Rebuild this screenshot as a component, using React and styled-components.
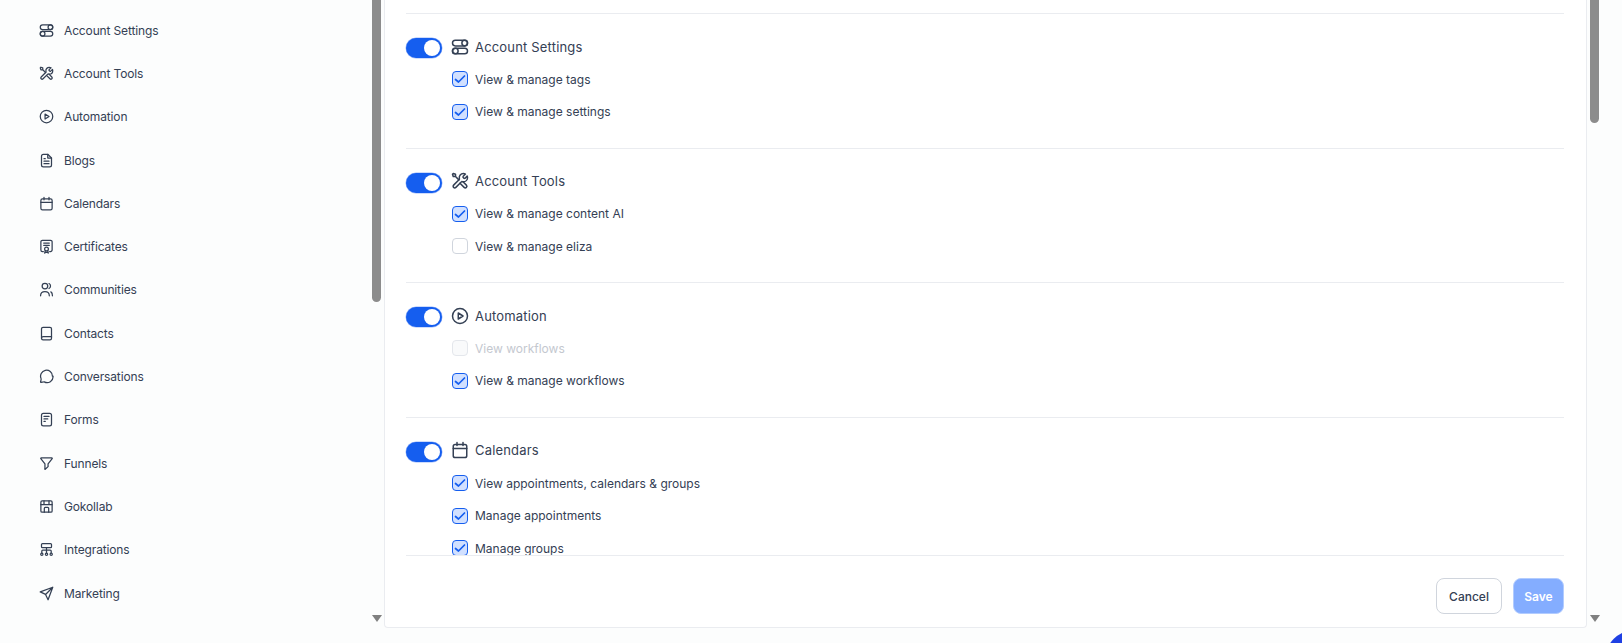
import React from 'react';
import styled, { createGlobalStyle } from 'styled-components';

const Global = createGlobalStyle`
  html, body { margin: 0; padding: 0; height: 100%; overflow: hidden; background: #fcfdfd; }
  #root { height: 100%; }
  * { box-sizing: border-box; }
`;

const Page = styled.div`
  position: relative; width: 1622px; height: 643px; display: flex; overflow: hidden;
  font-family: Inter, "Liberation Sans", sans-serif; color: #344054; background: #fcfdfd;
`;
const Sidebar = styled.nav`
  width: 372px; padding: 8.500px 0 0 39px; display: flex; flex-direction: column;
`;
const NavItem = styled.div`
  height: 43.3px; flex: none; display: flex; align-items: center; gap: 10px; font-size: 12px; letter-spacing: -.14px; color: #344054;
  svg { flex: none; width: 15px; height: 15px; color: #344054; }
`;
const Track = styled.div`
  width: 9px; height: 627px; display: flex; flex-direction: column; justify-content: space-between; align-items: center;
`;
const Thumb = styled.div`
  width: 9px; height: ${p => p.$h}px; background: #8c8c8c; border-radius: 0 0 5px 5px;
`;
const Arrow = styled.div`
  width: 0; height: 0; border-left: 5px solid transparent; border-right: 5px solid transparent; border-top: 7px solid #808080; margin-bottom: 5px;
`;
const Card = styled.main`
  width: 1203px; height: 628px; margin-left: 3px; margin-right: 3px; background: #fff;
  border: 1px solid #eaecf0; border-top: 0; border-radius: 0 0 4px 4px; display: flex; flex-direction: column;
`;
const Scroll = styled.div`
  height: 555px; overflow: hidden; padding: 13px 22px 0 21px; flex: none;
`;
const Section = styled.section`
  border-top: 1px solid #eaecf0; height: 134.6px; padding-top: 22px;
`;
const Head = styled.div`
  display: flex; align-items: center; height: 24px; font-size: 13px; color: #344054; letter-spacing: .18px;
  svg { width: 18px; height: 18px; margin: -3px 6px 0 9px; color: #344054; flex: none; }
  span { margin-top: -3px; }
`;
const Toggle = styled.div`
  width: 36px; height: 20px; border-radius: 10px; background: #155eef; padding: 2px 0 2px 18px; flex: none; box-shadow: 0 0 0 .5px #9db8f8;
  &::after { content: ''; display: block; width: 16px; height: 16px; border-radius: 50%; background: #fff; }
`;
const Row = styled.div`
  display: flex; align-items: center; gap: 7px; height: 32.5px; padding-left: 46px; font-size: 12px;
  color: ${p => (p.$disabled ? '#c4c8cf' : '#344054')};
`;
const Box = styled.span`
  width: 16px; height: 16px; border-radius: 4px; flex: none; display: flex; align-items: center; justify-content: center;
  border: 1px solid ${p => (p.$checked ? '#155eef' : p.$disabled ? '#e4e7ec' : '#d0d5dd')};
  background: ${p => (p.$checked ? '#d1e0ff' : p.$disabled ? '#f9fafb' : '#fff')};
  svg { width: 12px; height: 12px; color: #155eef; }
`;
const Checks = styled.div`
  padding-top: 3px;
`;
const Footer = styled.footer`
  margin: 0 22px 0 21px; border-top: 1px solid #eaecf0; padding-top: 22px; display: flex; justify-content: flex-end; gap: 11px;
`;
const Button = styled.button`
  height: 36px; border-radius: 8px; font: ${p => (p.$primary ? 600 : 500)} 12px Inter, "Liberation Sans", sans-serif; padding: 0;
  width: ${p => (p.$primary ? '51px' : '66px')};
  color: ${p => (p.$primary ? '#fff' : '#344054')};
  background: ${p => (p.$primary ? '#84adff' : '#fff')};
  border: 1px solid ${p => (p.$primary ? '#b2ccff' : '#d0d5dd')};
`;
const Fab = styled.div`
  position: absolute; left: 1605px; top: 630px; width: 60px; height: 60px; border-radius: 50%; background: #1f40e3;
`;

const S = ({ children }) => (
  <svg viewBox="0 0 24 24" fill="none" stroke="currentColor" strokeWidth="2" strokeLinecap="round" strokeLinejoin="round">{children}</svg>
);
const icons = {
  settings: <S><rect x="2" y="3" width="20" height="7.500" rx="3.750" /><circle cx="18.250" cy="6.750" r="3.750" /><rect x="2" y="13.500" width="20" height="7.500" rx="3.750" /><circle cx="5.750" cy="17.250" r="3.750" /></S>,
  tools: <S><path d="M6 6l4.500 4.500M6 6H3L2 3l1-1 3 1v3z" /><path d="M19.260 2.740l-2.630 2.630c-.4.400-.6.600-.67.820-.07.200-.07.420 0 .620.070.230.270.430.670.820l.24.240c.4.400.6.600.82.670.2.070.42.070.62 0 .23-.07.430-.27.820-.67l2.460-2.460c.26.640.41 1.350.41 2.090C22 10.540 19.540 13 16.500 13c-.37 0-.72-.04-1.070-.1-.49-.1-.73-.15-.88-.13-.16.020-.23.040-.37.120-.13.070-.26.200-.53.470L6.500 20.500a2.120 2.120 0 0 1-3-3l7.150-7.150c.27-.27.400-.4.470-.53.080-.14.100-.21.120-.37.010-.15-.04-.39-.13-.88A5.500 5.500 0 0 1 16.500 2c1.010 0 1.950.27 2.760.74z" /><path d="M12 15l5.500 5.500a2.120 2.120 0 0 0 3-3L16 13" /></S>,
  play: <S><circle cx="12" cy="12" r="10" /><path d="M9.700 8l6.300 4-6.300 4z" /></S>,
  file: <S><path d="M14 2H7a3 3 0 0 0-3 3v14a3 3 0 0 0 3 3h10a3 3 0 0 0 3-3V8z" /><path d="M14 2v6h6M8 13h8M8 17h8M8 9h2" /></S>,
  calendar: <S><rect x="3" y="4.500" width="18" height="17.500" rx="2.500" /><path d="M3 10h18M8 2v4M16 2v4" /></S>,
  certificate: <S><path d="M7 20H5.500A2.500 2.500 0 0 1 3 17.500v-13A2.500 2.500 0 0 1 5.500 2h13A2.500 2.500 0 0 1 21 4.500v13a2.500 2.500 0 0 1-2.500 2.500H17" /><path d="M7.500 6.500h9M7.500 10h9" /><circle cx="12" cy="16" r="3" /><path d="M10 19l-1 3.500 3-1.500 3 1.500-1-3.500" /></S>,
  users: <S><path d="M2.500 22c0-3.800 3-6.500 7-6.500s7 2.700 7 6.500" /><circle cx="9.500" cy="6.500" r="4.500" /><path d="M16 2.500a4.500 4.500 0 0 1 0 8M19 15.800c1.700.9 2.500 3.100 2.500 6.200" /></S>,
  book: <S><path d="M20 17.500V4.500A2.500 2.500 0 0 0 17.500 2h-11A2.500 2.500 0 0 0 4 4.500v15" /><path d="M20 17H6.500a2.500 2.500 0 0 0 0 5h11a2.500 2.500 0 0 0 2.500-2.500z" /></S>,
  message: <S><path d="M21.500 11.500a9.500 9.500 0 1 0-18.200 3.800c.2.400.2.700.1 1.100L2.600 20.500c-.2.500.3 1 .8.800l3.900-.8c.4-.1.700-.1 1.100.1a9.500 9.500 0 0 0 14.100-9.100z" /></S>,
  form: <S><rect x="4" y="2" width="16" height="20" rx="3" /><path d="M8 7h8M8 11h6M8 15h2" /></S>,
  funnel: <S><path d="M3.500 3h17a.8.8 0 0 1 .6 1.300L14.500 12.500V17l-5 4.500v-9L2.900 4.300A.8.800 0 0 1 3.500 3z" /></S>,
  building: <S><rect x="3" y="3" width="18" height="18" rx="2" /><path d="M3 9h18M8 3v6M16 3v6M8.500 21v-6a1.500 1.500 0 0 1 1.500-1.500h4a1.500 1.500 0 0 1 1.500 1.500v6" /></S>,
  flow: <S><rect x="4" y="2.500" width="16" height="6.500" rx="1.500" /><path d="M4.500 17v-2.500a1.500 1.500 0 0 1 1.500-1.500h12a1.500 1.500 0 0 1 1.500 1.500V17M12 9v8" /><circle cx="4.500" cy="19.500" r="1.800" /><circle cx="12" cy="19.500" r="1.800" /><circle cx="19.500" cy="19.500" r="1.800" /></S>,
  send: <S><path d="M22 2L2 9.500l8.500 4 4 8.500zM10.500 13.500L22 2" /></S>,
};

const nav = [
  ['settings', 'Account Settings'], ['tools', 'Account Tools'], ['play', 'Automation'], ['file', 'Blogs'],
  ['calendar', 'Calendars'], ['certificate', 'Certificates'], ['users', 'Communities'], ['book', 'Contacts'],
  ['message', 'Conversations'], ['form', 'Forms'], ['funnel', 'Funnels'], ['building', 'Gokollab'],
  ['flow', 'Integrations'], ['send', 'Marketing'],
];
const sections = [
  { icon: 'settings', title: 'Account Settings', items: [['View & manage tags', 1], ['View & manage settings', 1]] },
  { icon: 'tools', title: 'Account Tools', items: [['View & manage content AI', 1], ['View & manage eliza', 0]] },
  { icon: 'play', title: 'Automation', items: [['View workflows', 0, 1], ['View & manage workflows', 1]] },
  { icon: 'calendar', title: 'Calendars', items: [['View appointments, calendars & groups', 1], ['Manage appointments', 1], ['Manage groups', 1]] },
];

export default function App() {
  return (
    <Page>
      <Global />
      <Sidebar>
        {nav.map(([i, label]) => <NavItem key={label}>{icons[i]}<span>{label}</span></NavItem>)}
      </Sidebar>
      <Track><Thumb $h={302} /><Arrow /></Track>
      <Card>
        <Scroll>
          {sections.map(s => (
            <Section key={s.title}>
              <Head><Toggle />{icons[s.icon]}<span>{s.title}</span></Head>
              <Checks>
                {s.items.map(([label, checked, disabled]) => (
                  <Row key={label} $disabled={disabled}>
                    <Box $checked={checked} $disabled={disabled}>
                      {checked ? <svg viewBox="0 0 12 12" fill="none" stroke="currentColor" strokeWidth="1.700" strokeLinecap="round" strokeLinejoin="round"><path d="M1.500 6.500L4.500 9 10.500 3" /></svg> : null}
                    </Box>
                    <span>{label}</span>
                  </Row>
                ))}
              </Checks>
            </Section>
          ))}
        </Scroll>
        <Footer>
          <Button>Cancel</Button>
          <Button $primary>Save</Button>
        </Footer>
      </Card>
      <Track><Thumb $h={123} /><Arrow /></Track>
      <Fab />
    </Page>
  );
}
